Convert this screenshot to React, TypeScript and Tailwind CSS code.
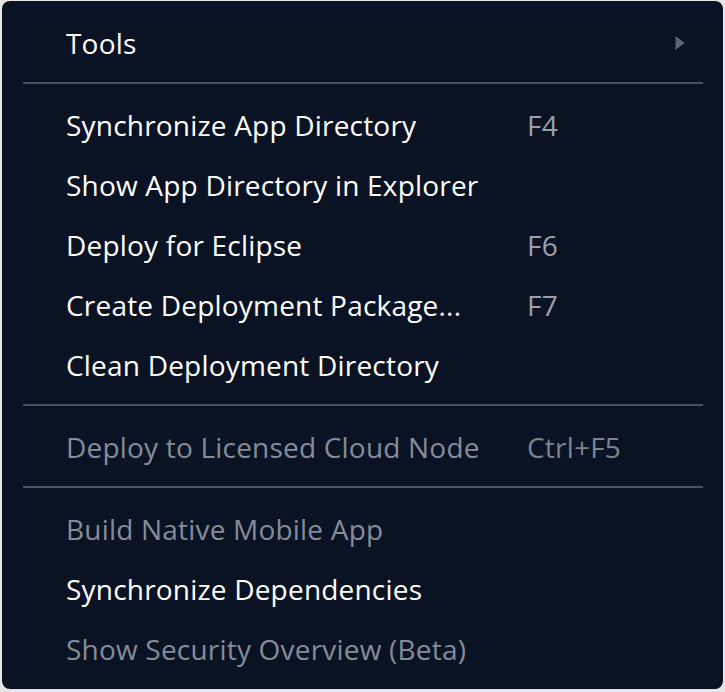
import { Fragment } from "react";

interface MenuItem {
  label: string;
  shortcut?: string;
  disabled?: boolean;
  submenu?: boolean;
}

// groups are split by separators
const GROUPS: MenuItem[][] = [
  [{ label: "Tools", submenu: true }],
  [
    { label: "Synchronize App Directory", shortcut: "F4" },
    { label: "Show App Directory in Explorer" },
    { label: "Deploy for Eclipse", shortcut: "F6" },
    { label: "Create Deployment Package...", shortcut: "F7" },
    { label: "Clean Deployment Directory" },
  ],
  [{ label: "Deploy to Licensed Cloud Node", shortcut: "Ctrl+F5", disabled: true }],
  [
    { label: "Build Native Mobile App", disabled: true },
    { label: "Synchronize Dependencies" },
    { label: "Show Security Overview (Beta)", disabled: true },
  ],
];

function Row({ item }: { item: MenuItem }) {
  return (
    <div className="flex items-center h-[60px] pl-[64px] pr-[38px] cursor-default">
      <span
        className={`w-[461px] shrink-0 whitespace-nowrap ${
          item.disabled ? "text-[#858c99]" : "text-white"
        }`}
      >
        {item.label}
      </span>
      {item.shortcut && (
        <span className={item.disabled ? "text-[#7d8490]" : "text-[#9ba1ab]"}>
          {item.shortcut}
        </span>
      )}
      {item.submenu && (
        <svg
          className="ml-auto shrink-0 w-[10px] h-[16px]"
          viewBox="0 0 10 16"
        >
          <path d="M0.5 1 L9.5 8 L0.5 15 Z" fill="#5e6575" />
        </svg>
      )}
    </div>
  );
}

export default function App() {
  return (
    <div className="w-[725px] h-[692px] bg-[#e6e6e6] pt-px pl-[2px]">
      <div
        className="w-[721px] h-[688px] bg-[#0a1324] rounded-[8px] pt-[12px] text-[28px] tracking-[0.2px]"
        style={{ fontFamily: '"Open Sans", "Noto Sans", sans-serif' }}
      >
        {GROUPS.map((group, gi) => (
          <Fragment key={gi}>
            {gi > 0 && (
              <div className="pt-[9px] pb-[11px] pl-[21px] pr-[20px]">
                <div className="h-[2px] bg-[#4a5163]" />
              </div>
            )}
            {group.map((item) => (
              <Row key={item.label} item={item} />
            ))}
          </Fragment>
        ))}
      </div>
    </div>
  );
}
